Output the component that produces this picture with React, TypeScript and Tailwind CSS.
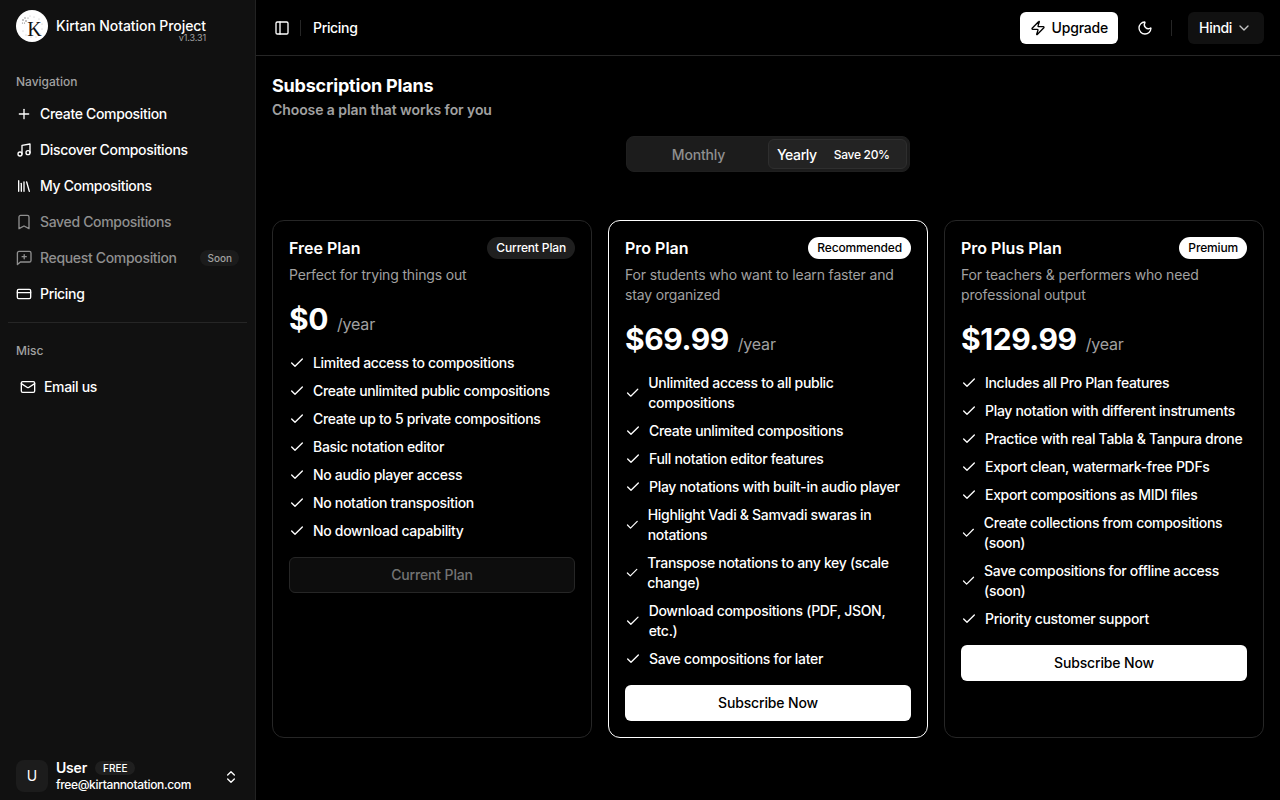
import { Plus, Music, Library, CreditCard, Mail, ChevronsUpDown, PanelLeft, Zap, Moon, ChevronDown, Check } from "lucide-react";

const font = { fontFamily: "Inter, 'Noto Sans', sans-serif" };

function BookmarkIcon() {
  return (
    <svg width="16" height="16" viewBox="0 0 16 16" fill="none" stroke="currentColor" strokeWidth="1.33" strokeLinejoin="round" className="shrink-0">
      <path d="M3 3A1.6 1.6 0 0 1 4.6 1.4H11.4A1.6 1.6 0 0 1 13 3V14.7L8 12L3 14.7Z" />
    </svg>
  );
}

function MessagePlusIcon() {
  return (
    <svg width="16" height="16" viewBox="0 0 16 16" fill="none" stroke="currentColor" strokeWidth="1.33" strokeLinecap="round" strokeLinejoin="round" className="shrink-0">
      <path d="M1.4 14.6V3A1.6 1.6 0 0 1 3 1.4H13.4A1.6 1.6 0 0 1 15 3V10.4A1.6 1.6 0 0 1 13.4 12H4.4Z" />
      <path d="M8.2 4.6V8.8M6.1 6.7H10.3" />
    </svg>
  );
}

const nav = [
  { icon: <Plus size={16} />, label: "Create Composition" },
  { icon: <Music size={16} />, label: "Discover Compositions" },
  { icon: <Library size={16} />, label: "My Compositions" },
  { icon: <BookmarkIcon />, label: "Saved Compositions", dim: true },
  { icon: <MessagePlusIcon />, label: "Request Composition", dim: true, soon: true },
  { icon: <CreditCard size={16} />, label: "Pricing" },
];

const plans = [
  {
    name: "Free Plan", badge: "Current Plan", badgeClass: "bg-[#1f1f1f] text-white", desc: "Perfect for trying things out", price: "$0", current: true,
    features: ["Limited access to compositions", "Create unlimited public compositions", "Create up to 5 private compositions", "Basic notation editor", "No audio player access", "No notation transposition", "No download capability"],
  },
  {
    name: "Pro Plan", badge: "Recommended", badgeClass: "bg-white text-black", desc: "For students who want to learn faster and stay organized", price: "$69.99", highlight: true,
    features: ["Unlimited access to all public compositions", "Create unlimited compositions", "Full notation editor features", "Play notations with built-in audio player", "Highlight Vadi & Samvadi swaras in notations", "Transpose notations to any key (scale change)", "Download compositions (PDF, JSON, etc.)", "Save compositions for later"],
  },
  {
    name: "Pro Plus Plan", badge: "Premium", badgeClass: "bg-white text-black", desc: "For teachers & performers who need professional output", price: "$129.99",
    features: ["Includes all Pro Plan features", "Play notation with different instruments", "Practice with real Tabla & Tanpura drone", "Export clean, watermark-free PDFs", "Export compositions as MIDI files", "Create collections from compositions (soon)", "Save compositions for offline access (soon)", "Priority customer support"],
  },
];

function Logo() {
  return (
    <svg width="32" height="32" viewBox="0 0 32 32" className="shrink-0">
      <circle cx="16" cy="16" r="16" fill="#fff" />
      <text x="18.5" y="26" textAnchor="middle" fontSize="20" fill="#111" fontFamily="'Liberation Serif', serif">K</text>
      <g fill="#777">
        <circle cx="7" cy="10" r="0.8" /><circle cx="9" cy="8" r="0.7" /><circle cx="6.5" cy="13" r="0.6" /><circle cx="10" cy="11" r="0.8" /><circle cx="8.5" cy="13" r="0.6" />
        <circle cx="12" cy="8" r="0.6" /><circle cx="14" cy="6" r="0.4" /><circle cx="18" cy="7" r="0.4" /><circle cx="23" cy="9" r="0.4" /><circle cx="26" cy="14" r="0.4" />
        <circle cx="26" cy="19" r="0.4" /><circle cx="24" cy="24" r="0.4" /><circle cx="20" cy="27" r="0.4" /><circle cx="15" cy="27" r="0.4" /><circle cx="10" cy="25" r="0.4" /><circle cx="7" cy="21" r="0.4" />
      </g>
    </svg>
  );
}

function Sidebar() {
  return (
    <aside className="flex h-screen w-64 shrink-0 flex-col border-r border-[#222] bg-[#111111] text-white">
      <div className="flex h-[54px] items-start gap-2 px-4 pt-[10px]">
        <Logo />
        <div className="flex w-[150px] flex-col pt-[6px]">
          <span className="text-sm leading-5 font-medium tracking-[-0.08px] whitespace-nowrap">Kirtan Notation Project</span>
          <span className="-mt-[3px] text-right text-[9px] leading-[10px] tracking-[-0.1px] text-[#a1a1a1]">v1.3.31</span>
        </div>
      </div>
      <div className="mt-[20px] px-4 text-xs leading-4 font-medium text-[#a1a1a1]">Navigation</div>
      <nav className="mt-[6px] flex flex-col">
        {nav.map((n) => (
          <div key={n.label} className={`flex h-9 items-center gap-2 px-4 text-sm font-medium tracking-[-0.33px] ${n.dim ? "text-[#8f8f8f]" : "text-white"}`}>
            {n.icon}
            <span>{n.label}</span>
            {n.soon && <span className="ml-auto rounded-full bg-[#1b1b1b] px-[7px] py-px text-[10px] leading-[14px] font-medium tracking-normal text-[#a1a1a1]">Soon</span>}
          </div>
        ))}
      </nav>
      <div className="mx-2 mt-[10px] h-px bg-[#262626]" />
      <div className="mt-[20px] px-4 text-xs leading-4 font-medium text-[#a1a1a1]">Misc</div>
      <div className="mt-[10px] flex h-9 items-center gap-2 px-5 text-sm font-medium tracking-[-0.33px]">
        <Mail size={16} />
        <span>Email us</span>
      </div>
      <div className="mt-auto flex items-start gap-2 px-4 pb-[7px]">
        <div className="flex size-8 items-center justify-center rounded-lg bg-[#1c1c1c] text-sm">U</div>
        <div className="flex flex-col">
          <div className="flex h-4 items-center gap-2">
            <span className="text-sm leading-4 font-semibold tracking-[-0.2px]">User</span>
            <span className="rounded-full bg-[#1f1f1f] px-2 text-[10px] leading-[14px] font-medium">FREE</span>
          </div>
          <span className="mt-px text-xs leading-4 font-medium tracking-[-0.35px] whitespace-nowrap">free@kirtannotation.com</span>
        </div>
        <ChevronsUpDown size={16} className="ml-auto self-center" />
      </div>
    </aside>
  );
}

function Header() {
  return (
    <header className="flex h-14 shrink-0 items-center border-b border-[#262626] pr-4 pl-[18px] text-white">
      <PanelLeft size={16} />
      <div className="mx-[10px] h-4 w-px bg-[#262626]" />
      <span className="ml-[2px] text-sm font-medium tracking-[-0.33px]">Pricing</span>
      <div className="ml-auto flex items-center">
        <button className="flex h-8 items-center gap-[6px] rounded-md bg-white px-[10px] text-sm font-medium tracking-[-0.2px] text-black">
          <Zap size={16} />Upgrade
        </button>
        <Moon size={16} className="mr-[18px] ml-[19px]" />
        <div className="h-4 w-px bg-[#262626]" />
        <button className="ml-4 flex h-8 items-center gap-1 rounded-md bg-[#111111] pr-3 pl-[11px] text-sm font-medium tracking-[-0.33px]">
          Hindi<ChevronDown size={16} className="text-[#c4c4c4]" />
        </button>
      </div>
    </header>
  );
}

function Card({ plan }: { plan: (typeof plans)[number] }) {
  return (
    <div className={`flex flex-col rounded-xl border bg-black p-4 ${plan.highlight ? "border-white" : "border-[#262626]"}`}>
      <div className="flex h-[22px] items-center justify-between">
        <span className="text-base font-semibold">{plan.name}</span>
        <span className={`rounded-full px-[9px] text-xs leading-[22px] font-medium tracking-[-0.15px] ${plan.badgeClass}`}>{plan.badge}</span>
      </div>
      <p className="mt-[6px] text-sm leading-5 tracking-[-0.16px] text-[#a1a1a1]">{plan.desc}</p>
      <div className="mt-4 flex h-9 items-baseline gap-[9px]">
        <span className="text-3xl leading-9 font-bold tracking-[-0.43px]">{plan.price}</span>
        <span className="text-base tracking-[-0.2px] text-[#a1a1a1]">/year</span>
      </div>
      <ul className="mt-4 flex flex-col gap-2">
        {plan.features.map((f) => (
          <li key={f} className="flex items-center gap-2 text-sm leading-5 font-medium tracking-[-0.31px]">
            <Check size={16} />
            <span>{f}</span>
          </li>
        ))}
      </ul>
      {plan.current ? (
        <button className="mt-4 h-9 w-full rounded-md border border-[#262626] bg-[#0d0d0d] text-sm font-medium tracking-[-0.15px] text-[#737373]">Current Plan</button>
      ) : (
        <button className="mt-4 h-9 w-full rounded-md bg-white text-sm font-medium tracking-[-0.15px] text-black">Subscribe Now</button>
      )}
    </div>
  );
}

export default function App() {
  return (
    <div style={font} className="flex h-screen w-full overflow-hidden bg-black text-white">
      <Sidebar />
      <div className="flex min-w-0 flex-1 flex-col">
        <Header />
        <main className="flex-1 px-4 pt-4">
          <h1 className="text-lg leading-7 font-bold tracking-[-0.2px]">Subscription Plans</h1>
          <p className="text-sm leading-5 font-semibold tracking-[-0.08px] text-[#a1a1a1]">Choose a plan that works for you</p>
          <div className="mt-4 flex justify-center">
            <div className="grid h-9 w-[284px] grid-cols-2 items-center rounded-lg border border-[#1f1f1f] bg-[#1c1c1c] p-[2px] text-sm font-medium">
              <div className="pt-px text-center tracking-[-0.15px] text-[#8f8f8f]">Monthly</div>
              <div className="flex h-[30px] items-center gap-[8px] rounded-md border border-[#2e2e2e] bg-[#232323] pt-px pl-2 text-white">
                <span className="tracking-[-0.4px]">Yearly</span>
                <span className="pr-2 pl-[9px] text-xs tracking-[-0.3px]">Save 20%</span>
              </div>
            </div>
          </div>
          <div className="mt-12 grid grid-cols-3 gap-4">
            {plans.map((p) => <Card key={p.name} plan={p} />)}
          </div>
        </main>
      </div>
    </div>
  );
}
